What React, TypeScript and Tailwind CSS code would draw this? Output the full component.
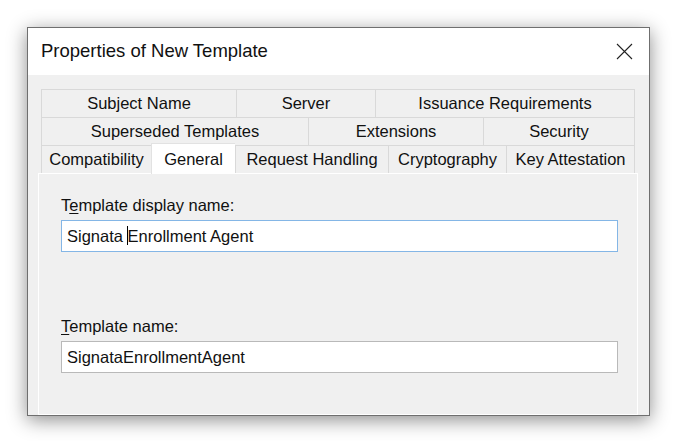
const tabRows: { label: string; w: number; selected?: boolean }[][] = [
  [
    { label: "Subject Name", w: 195 },
    { label: "Server", w: 139 },
    { label: "Issuance Requirements", w: 260 },
  ],
  [
    { label: "Superseded Templates", w: 267 },
    { label: "Extensions", w: 175 },
    { label: "Security", w: 152 },
  ],
  [
    { label: "Compatibility", w: 110 },
    { label: "General", w: 84, selected: true },
    { label: "Request Handling", w: 153 },
    { label: "Cryptography", w: 118 },
    { label: "Key Attestation", w: 129 },
  ],
];

function Tab({ label, w, selected, last }: { label: string; w: number; selected?: boolean; last: boolean }) {
  if (selected) {
    return (
      <div
        className="relative z-10 -mt-[2px] flex h-[31px] shrink-0 items-start justify-center border-l border-t border-[#e2e2e2] bg-white pt-[3px]"
        style={{ width: w }}
      >
        {label}
      </div>
    );
  }
  return (
    <div
      className={`flex h-[28px] shrink-0 items-center justify-center border-l border-t border-[#d9d9d9] bg-[#f0f0f0] ${last ? "border-r" : ""}`}
      style={{ width: w }}
    >
      {label}
    </div>
  );
}

export default function App() {
  return (
    <div
      className="h-[441px] w-[675px] overflow-hidden bg-white pl-[27px] pt-[27px] text-[#111]"
      style={{ fontFamily: '"Liberation Sans", Arial, sans-serif' }}
    >
      <div className="flex h-[389px] w-[623px] flex-col overflow-hidden border border-[#6f6f6f] bg-[#f0f0f0] shadow-[0_4px_18px_rgba(0,0,0,0.45)]">
        {/* title bar */}
        <div className="flex h-[47px] shrink-0 items-center justify-between bg-white pl-[13px] pr-[16px]">
          <span className="text-[18.5px] leading-none">Properties of New Template</span>
          <svg width="17" height="17" viewBox="0 0 17 17">
            <path d="M1 1 L16 16 M16 1 L1 16" stroke="#222" strokeWidth="1.1" fill="none" />
          </svg>
        </div>

        {/* body */}
        <div className="flex flex-1 flex-col px-[10px] pt-[14px] text-[16.5px]">
          <div className="ml-[3px] flex w-[594px] flex-col">
            {tabRows.map((row, ri) => (
              <div key={ri} className="flex h-[28px] items-start">
                {row.map((t, i) => (
                  <Tab key={t.label} label={t.label} w={t.w} selected={t.selected} last={i === row.length - 1} />
                ))}
              </div>
            ))}
          </div>

          <div className="w-[600px] flex-1 border border-white pl-[22px] pt-[22px]">
            <div className="h-[19px] leading-[19px]">
              T<span className="underline underline-offset-2">e</span>mplate display name:
            </div>
            <div className="mt-[5px] flex h-[32px] w-[557px] items-center border border-[#84b6e6] bg-white pl-[5px]">
              <span>
                Signata{" "}
                <span className="relative">
                  <span className="absolute -left-px top-[-1px] h-[19px] w-px bg-black" />E
                </span>
                nrollment Agent
              </span>
            </div>

            <div className="mt-[65px] h-[19px] leading-[19px]">
              <span className="underline underline-offset-2">T</span>emplate name:
            </div>
            <div className="mt-[5px] flex h-[32px] w-[557px] items-center border border-[#b9b9b9] bg-white pl-[5px]">
              SignataEnrollmentAgent
            </div>
          </div>
        </div>
      </div>
    </div>
  );
}
